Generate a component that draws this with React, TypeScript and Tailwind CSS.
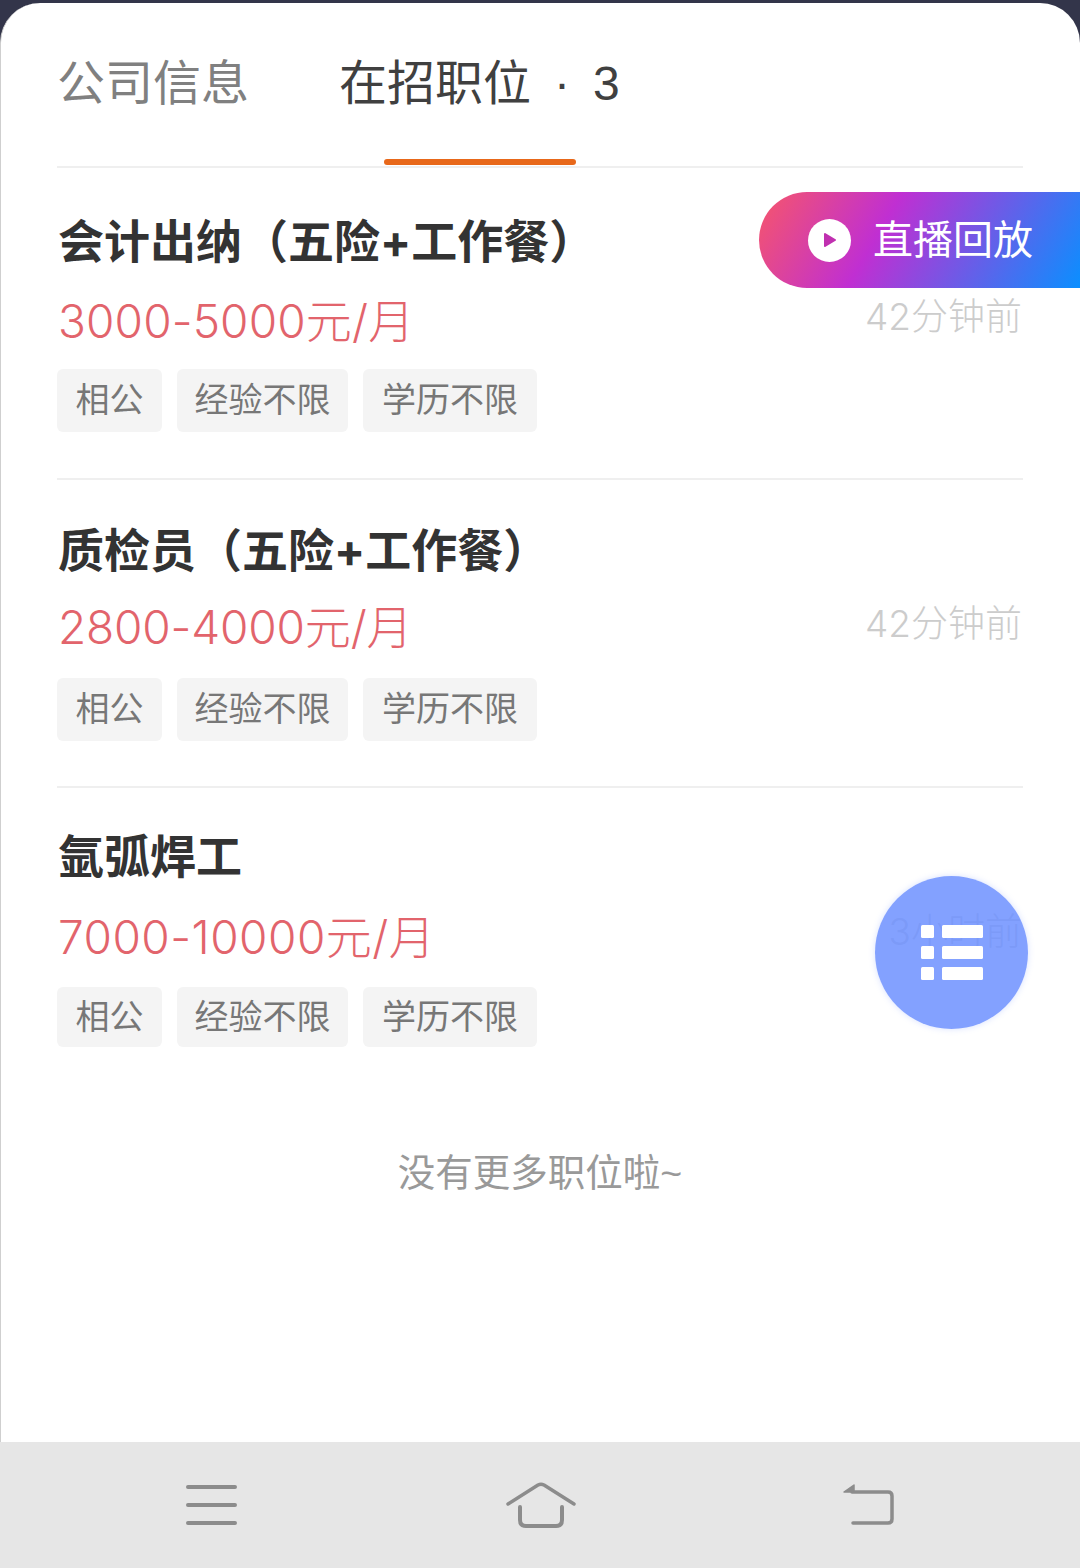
import React from "react"

const font = { fontFamily: '"Liberation Sans", "Noto Sans CJK SC", sans-serif' }
const latin = { fontFamily: 'Inter, "Noto Sans CJK SC", sans-serif' }

type Job = {
  title: string
  salary: string
  time: string
  rowClass: string
  salaryClass: string
  tagsClass: string
  tagClass: string
  timeClass: string
}

const jobs: Job[] = [
  {
    title: "会计出纳（五险+工作餐）",
    salary: "3000-5000元/月",
    time: "42分钟前",
    rowClass: "pt-[41px] pb-[46px] border-b-2 border-[#efefef]",
    salaryClass: "mt-[18px] tracking-[0.15px]",
    tagsClass: "mt-[18px]",
    tagClass: "h-[63px]",
    timeClass: "mt-[86px]",
  },
  {
    title: "质检员（五险+工作餐）",
    salary: "2800-4000元/月",
    time: "42分钟前",
    rowClass: "pt-[38px] pb-[45px] border-b-2 border-[#efefef]",
    salaryClass: "mt-[15px] tracking-[-0.15px]",
    tagsClass: "mt-[21px]",
    tagClass: "h-[63px]",
    timeClass: "mt-[84px]",
  },
  {
    title: "氩弧焊工",
    salary: "7000-10000元/月",
    time: "3小时前",
    rowClass: "pt-[36px]",
    salaryClass: "mt-[19px] tracking-[0.5px]",
    tagsClass: "mt-[20px]",
    tagClass: "h-[60px]",
    timeClass: "mt-[86px]",
  },
]

const tags = [
  { label: "相公", width: "w-[105px]" },
  { label: "经验不限", width: "w-[171px]" },
  { label: "学历不限", width: "w-[174px]" },
]

const JobRow: React.FC<{ job: Job }> = ({ job }) => {
  return (
    <div className={`flex justify-between ${job.rowClass}`}>
      <div>
        <h3 className="pl-[1px] text-[46px] leading-[64px] font-bold text-[#333333]" style={latin}>
          {job.title}
        </h3>
        <div className={`pl-[1px] text-[46px] leading-[60px] font-light text-[#e2646c] ${job.salaryClass}`} style={latin}>
          {job.salary}
        </div>
        <div className={`flex gap-[15px] ${job.tagsClass}`}>
          {tags.map((t) => (
            <span
              key={t.label}
              className={`flex items-center justify-center rounded-[6px] bg-[#f4f4f4] text-[34px] text-[#777777] ${t.width} ${job.tagClass}`}>
              {t.label}
            </span>
          ))}
        </div>
      </div>
      <div className={`pr-[1px] text-[37px] leading-[44px] font-light text-[#cccccc] ${job.timeClass}`} style={latin}>
        {job.time}
      </div>
    </div>
  )
}

const App: React.FC = () => {
  return (
    <div className="relative flex h-[1568px] w-[1080px] flex-col overflow-hidden bg-[#33354a] pt-[3px]" style={font}>
      <div className="flex flex-1 flex-col rounded-t-[40px] border-l border-[#cfcfcf] bg-white pr-[57px] pl-[56px]">
        {/* tabs */}
        <div className="relative flex h-[165px] items-start border-b-2 border-[#efefef] pt-[53px] text-[48px] leading-[56px]">
          <span className="text-[#808080]">公司信息</span>
          <span className="ml-[90px] text-[#404040]">在招职位</span>
          <span className="ml-[23px] text-[#404040]">·</span>
          <span className="ml-[23px] text-[#404040]">3</span>
          <div className="absolute bottom-[1px] left-[327px] h-[6px] w-[192px] rounded-full bg-[#e8681a]" />
        </div>

        {jobs.map((job) => (
          <JobRow key={job.title} job={job} />
        ))}

        <div className="mt-[103px] text-center text-[37.5px] leading-[46px] text-[#999999]">
          没有更多职位啦~
        </div>
      </div>

      {/* bottom nav */}
      <div className="flex h-[126px] items-center justify-between bg-[#e6e6e6] pr-[186px] pl-[186px] text-[#8c8c8c]">
        <svg width="51" height="40" viewBox="0 0 51 40" fill="none" stroke="currentColor" strokeWidth="4" strokeLinecap="round">
          <path d="M2 2h47M2 20h47M2 38h47" />
        </svg>
        <svg className="ml-[1px]" width="70" height="46" viewBox="1 0 70 46" fill="none" stroke="currentColor" strokeWidth="3.5" strokeLinecap="round" strokeLinejoin="round">
          <path d="M3 22 33 3q3-1.500 6 0L69 22" />
          <path d="M15 25v13q0 6 6 6h30q6 0 6-6V25" strokeWidth="4" />
        </svg>
        <svg width="51" height="42" viewBox="0 0 51 42" fill="none" stroke="currentColor" strokeWidth="3.500" strokeLinecap="round" strokeLinejoin="round">
          <path d="M9 8h36q4 0 4 4v23q0 4-4 4H10" />
          <path d="M1 8 11 1v7z" fill="currentColor" strokeWidth="1.500" />
        </svg>
      </div>

      {/* live replay pill */}
      <div className="absolute top-[192px] left-[759px] flex h-[96px] w-[321px] items-center rounded-l-full bg-[linear-gradient(120deg,#f7566a_0%,#c02fd2_38%,#0a8fff_100%)] pl-[49px]">
        <span className="flex h-[43px] w-[43px] items-center justify-center rounded-full bg-white">
          <svg width="14" height="16" viewBox="0 0 14 16">
            <path d="M2 2l10 6-10 6z" fill="#c030b0" stroke="#c030b0" strokeWidth="2" strokeLinejoin="round" />
          </svg>
        </span>
        <span className="ml-[22px] text-[40px] leading-none text-white">直播回放</span>
      </div>

      {/* floating list button */}
      <div className="absolute top-[876px] left-[875px] flex h-[153px] w-[153px] items-center justify-center rounded-full bg-[#6d90ff]/85 shadow-[0_0_6px_rgba(127,156,255,0.3)]">
        <svg width="62" height="56" viewBox="0 0 62 56" fill="white">
          <rect x="0" y="0" width="13" height="13" rx="1.500" />
          <rect x="21" y="0" width="41" height="13" rx="1.500" />
          <rect x="0" y="21" width="13" height="13" rx="1.500" />
          <rect x="21" y="21" width="41" height="13" rx="1.500" />
          <rect x="0" y="42" width="13" height="13" rx="1.500" />
          <rect x="21" y="42" width="41" height="13" rx="1.500" />
        </svg>
      </div>
    </div>
  )
}

export default App
